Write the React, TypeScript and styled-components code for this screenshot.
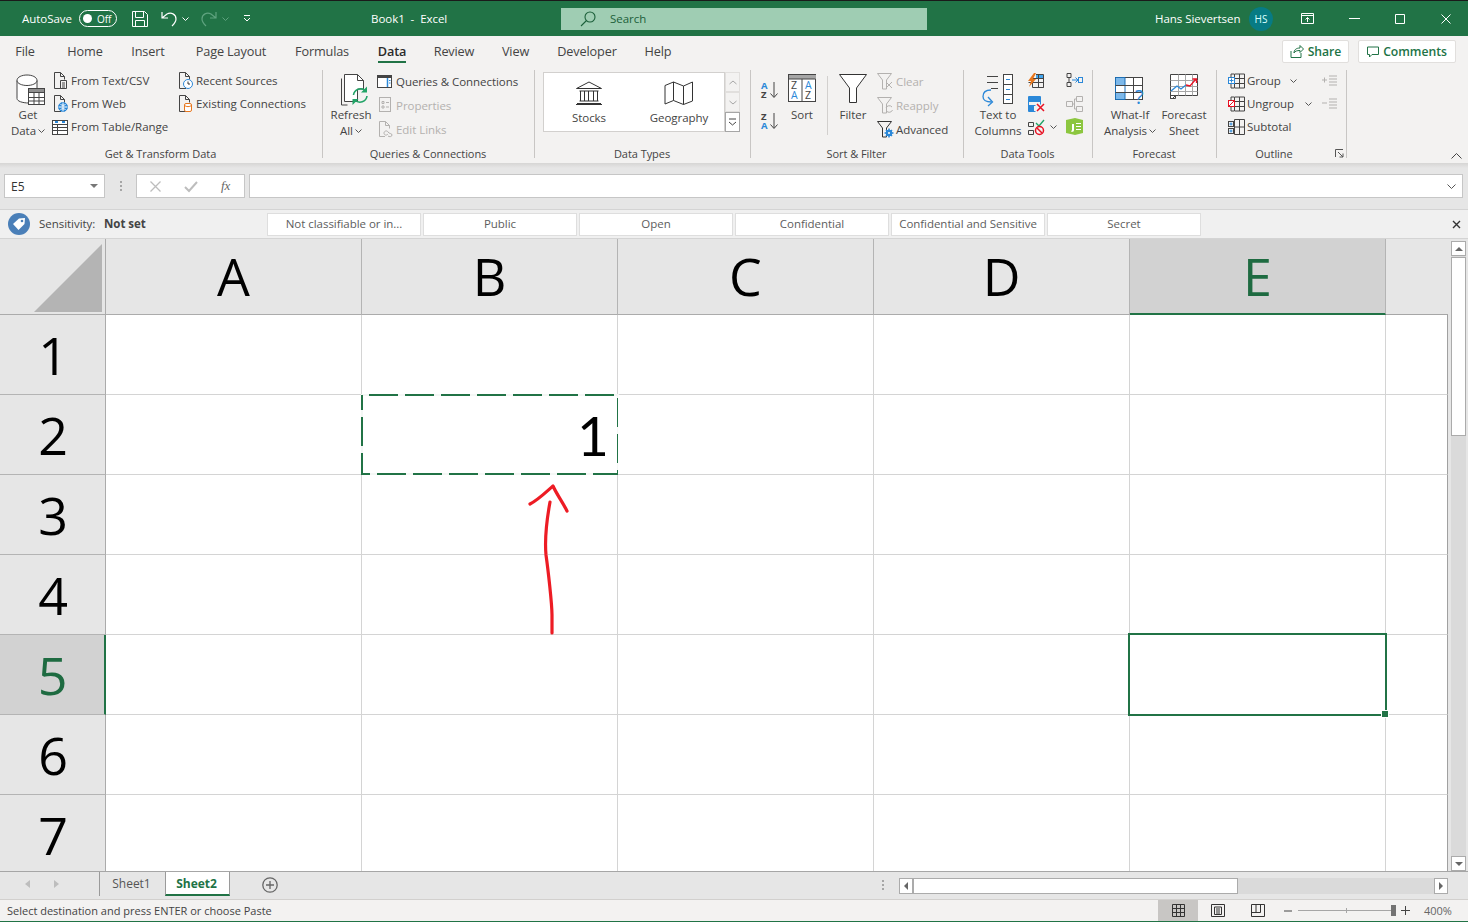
import React from "react";
import styled, { createGlobalStyle } from "styled-components";

const GREEN = "#217346";
const INK = "#444444";
const DIM = "#b3b1af";
const FONT = `"Open Sans", "Noto Sans", "Liberation Sans", sans-serif`;

const Global = createGlobalStyle`
  html, body { margin: 0; padding: 0; overflow: hidden; background: #f3f2f1; }
  * { box-sizing: border-box; }
`;

const Page = styled.div`
  width: 1468px; height: 922px; display: flex; flex-direction: column; overflow: hidden;
  font-family: ${FONT}; font-size: 11.5px; color: ${INK}; letter-spacing: -0.04px;
`;

/* ---------- title bar ---------- */
const TitleBar = styled.div`
  height: 36px; flex: none; background: ${GREEN}; border-top: 1px solid #1a1a1a; color: #fff;
  display: flex; align-items: center; padding-left: 22px;
`;
const TitleText = styled.span<{ $ml?: number; $w?: number }>`
  margin-left: ${(p) => p.$ml ?? 0}px; font-size: 11.5px; white-space: nowrap; flex: none;
  ${(p) => (p.$w ? `width:${p.$w}px;` : "")}
`;
const Toggle = styled.span`
  width: 38px; height: 17px; border: 1px solid #fff; border-radius: 9px; margin-left: 8px; flex: none;
  display: flex; align-items: center; padding-left: 3px; gap: 5px; font-size: 10px; color: #fff;
`;
const Knob = styled.span`width: 9px; height: 9px; border-radius: 50%; background: #fff; flex: none;`;
const SearchBox = styled.div`
  width: 366px; height: 22px; background: #9fcdb3; margin-left: 113px; flex: none;
  display: flex; align-items: center; padding-left: 19px; color: #1c5f3a; gap: 14px; font-size: 11.5px;
`;
const Avatar = styled.span`
  width: 24px; height: 24px; border-radius: 50%; background: #077b84; color: #dff; font-size: 10px;
  display: flex; align-items: center; justify-content: center; margin-left: 11px; flex: none;
`;
const Spacer = styled.span<{ $w: number }>`width: ${(p) => p.$w}px; flex: none; display: flex; align-items: center;`;

/* ---------- tabs ---------- */
const TabRow = styled.div`
  height: 32px; flex: none; background: #f3f2f1; display: flex; align-items: center; padding-left: 4px; position: relative;
`;
const Tab = styled.div<{ $w: number; $on?: boolean }>`
  width: ${(p) => p.$w}px; flex: none; height: 32px; font-size: 12.7px; line-height: 31px; text-align: center;
  letter-spacing: -0.15px; color: ${(p) => (p.$on ? "#2b2b2b" : INK)}; font-weight: ${(p) => (p.$on ? 600 : 400)};
  display: flex; flex-direction: column; align-items: center;
`;
const TabBar = styled.span`width: 28px; height: 2px; background: ${GREEN}; margin-top: -6px; flex: none;`;
const TopButtons = styled.div`margin-left: auto; display: flex; gap: 9px; padding-right: 12px; margin-top: -1px;`;
const TopButton = styled.div<{ $w: number }>`
  width: ${(p) => p.$w}px; height: 23px; background: #fff; border: 1px solid #e1dfdd; border-radius: 2px; color: ${GREEN};
  font-size: 12.2px; font-weight: 600; display: flex; align-items: center; justify-content: center; gap: 4px;
`;

/* ---------- ribbon ---------- */
const Ribbon = styled.div`height: 95px; flex: none; background: #f3f2f1; display: flex; padding-top: 2px;`;
const Group = styled.div<{ $w: number }>`
  width: ${(p) => p.$w}px; flex: none; display: flex; flex-direction: column; position: relative;
  &::after { content: ""; position: absolute; right: 0; top: 0; width: 1px; height: 88px; background: #c8c6c4; }
`;
const Body = styled.div<{ $pl: number }>`height: 76px; flex: none; display: flex; padding-left: ${(p) => p.$pl}px;`;
const GroupLabel = styled.div<{ $pr?: number }>`
  height: 16px; line-height: 16px; text-align: center; font-size: 11px; letter-spacing: -0.05px; padding-right: ${(p) => p.$pr ?? 2}px; white-space: nowrap;
`;
const Launcher = styled.span`position: absolute; right: 3px; top: 79px; display: flex;`;
const Big = styled.div<{ $w: number; $ml?: number }>`
  width: ${(p) => p.$w}px; margin-left: ${(p) => p.$ml ?? 0}px; flex: none; display: flex; flex-direction: column; align-items: center; line-height: 16px; padding-top: 4px; white-space: nowrap;
`;
const BigIcon = styled.div<{ $pl?: number; $pt?: number }>`
  height: 33px; flex: none; display: flex; align-items: flex-start; justify-content: center;
  padding-left: ${(p) => p.$pl ?? 0}px; padding-top: ${(p) => p.$pt ?? 0}px;
`;
const Caret = styled.span`display: inline-flex; align-items: center; gap: 2px;`;
const Col = styled.div<{ $w?: number; $ml?: number; $pitch?: number }>`
  display: flex; flex-direction: column; flex: none; margin-left: ${(p) => p.$ml ?? 0}px; margin-top: -1px;
  ${(p) => (p.$w ? `width:${p.$w}px;` : "")}
  & > * { height: ${(p) => p.$pitch ?? 23}px; flex: none; }
`;
const Small = styled.div<{ $off?: boolean; $gap?: number }>`
  display: flex; align-items: center; gap: ${(p) => p.$gap ?? 3}px; white-space: nowrap; color: ${(p) => (p.$off ? DIM : INK)};
`;
const SortCol = styled.div`width: 18px; margin-left: 10px; flex: none; display: flex; flex-direction: column; gap: 13px; padding-top: 11px;`;
const VRule = styled.div`width: 1px; height: 59px; background: #d2d0ce; margin: 6px 5px 0 8px; flex: none;`;
const ChevronSlot = styled.span<{ $ml: number }>`margin-left: ${(p) => p.$ml}px; display: flex;`;
const Gallery = styled.div`
  width: 197px; height: 60px; margin: 2px 0 0 8px; display: flex; flex: none;
`;
const GalleryItems = styled.div`
  width: 182px; height: 60px; background: #fff; border: 1px solid #d2d0ce; display: flex; flex: none;
`;
const GalleryItem = styled.div`
  width: 90px; flex: none; display: flex; flex-direction: column; align-items: center; padding-top: 8px; gap: 5px; line-height: 16px;
`;
const GalleryScroll = styled.div`width: 15px; flex: none; display: flex; flex-direction: column; gap: 0;`;
const GalleryBtn = styled.div<{ $on?: boolean }>`
  flex: 1; border: 1px solid ${(p) => (p.$on ? "#a6a6a6" : "#e1dfdd")}; background: ${(p) => (p.$on ? "#fff" : "#f3f2f1")};
  display: flex; align-items: center; justify-content: center;
`;
const Collapse = styled.div`margin-left: auto; align-self: flex-end; padding: 0 6px 4px 0; display: flex;`;

/* ---------- formula ---------- */
const FormulaBar = styled.div`
  height: 46px; flex: none; padding: 11px 5px 0 4px; display: flex; align-items: flex-start;
  background: linear-gradient(#d6d5d4 0, #e6e6e6 5px, #e6e6e6 100%);
`;
const FBox = styled.div<{ $w?: number; $grow?: boolean; $ml?: number }>`
  height: 24px; background: #fff; border: 1px solid #c6c6c6; flex: ${(p) => (p.$grow ? "1" : "none")};
  ${(p) => (p.$w ? `width:${p.$w}px;` : "")} margin-left: ${(p) => p.$ml ?? 0}px;
  display: flex; align-items: center; padding: 0 6px; justify-content: space-between; color: #333; font-size: 12px;
`;
const FxBox = styled.div`
  height: 24px; width: 109px; background: #fff; border: 1px solid #c6c6c6; flex: none;
  display: flex; align-items: center; padding-left: 13px; gap: 23px;
`;
const Grip = styled.div`
  width: 31px; height: 24px; flex: none; display: flex; flex-direction: column; align-items: center; justify-content: center; gap: 2px;
  & > span { width: 2px; height: 2px; background: #a6a6a6; }
`;

/* ---------- sensitivity ---------- */
const SensBar = styled.div`
  height: 30px; flex: none; background: #f0f0f0; border-top: 1px solid #d4d4d4; border-bottom: 1px solid #d4d4d4;
  display: flex; align-items: center; padding-left: 8px; position: relative;
`;
const SensName = styled.span<{ $w: number; $b?: boolean; $ml?: number }>`
  width: ${(p) => p.$w}px; margin-left: ${(p) => p.$ml ?? 0}px; flex: none; white-space: nowrap; margin-top: -2px; font-weight: ${(p) => (p.$b ? 700 : 400)};
`;
const SensBtns = styled.div`display: flex; gap: 2px; flex: none;`;
const SensBtn = styled.div`
  width: 154px; height: 23px; background: #fff; border: 1px solid #dedede; text-align: center; line-height: 20px; color: #5d5d5d; white-space: nowrap;
`;
const SensClose = styled.span`margin-left: auto; margin-right: 7px; display: flex;`;

/* ---------- sheet ---------- */
const SheetArea = styled.div`height: 632px; flex: none; display: flex; background: #e6e6e6;`;
const GridWrap = styled.div`width: 1448px; height: 632px; flex: none; position: relative; overflow: hidden;`;
const Grid = styled.div`
  display: grid; grid-template-columns: 106px repeat(5, 256px) 62px; grid-template-rows: 76px repeat(7, 80px);
  width: 1448px;
`;
const Corner = styled.div`
  background: #e6e6e6; border-right: 1px solid #ababab; border-bottom: 1px solid #ababab; display: flex; align-items: flex-end; justify-content: flex-end; padding: 0 3px 2px 0;
`;
const Triangle = styled.div`
  width: 68px; height: 68px; background: #b4b4b4; clip-path: polygon(100% 0, 100% 100%, 0 100%);
`;
const ColHead = styled.div<{ $sel?: boolean }>`
  background: ${(p) => (p.$sel ? "#d2d2d2" : "#e6e6e6")}; border-right: 1px solid #b4b4b4;
  border-bottom: ${(p) => (p.$sel ? `2px solid ${GREEN}` : "1px solid #ababab")};
  color: ${(p) => (p.$sel ? "#1e6b41" : "#000")}; font-size: 52px; letter-spacing: 0; line-height: 73px; text-align: center;
`;
const ColFill = styled.div`background: #e6e6e6; border-bottom: 1px solid #a6a6a6;`;
const RowHead = styled.div<{ $sel?: boolean }>`
  background: ${(p) => (p.$sel ? "#d2d2d2" : "#e6e6e6")}; border-bottom: 1px solid #b4b4b4;
  border-right: ${(p) => (p.$sel ? `2px solid ${GREEN}` : "1px solid #ababab")};
  color: ${(p) => (p.$sel ? "#1e6b41" : "#000")}; font-size: 52px; letter-spacing: 0; line-height: 80px; text-align: center; padding-left: 1px;
`;
const Cell = styled.div<{ $end?: boolean }>`
  background: #fff; border-bottom: 1px solid #d4d4d4; position: relative;
  border-right: 1px solid ${(p) => (p.$end ? "#a0a0a0" : "#d4d4d4")};
`;
const CellValue = styled.div`
  font-family: Lato, Carlito, sans-serif; font-size: 55px; line-height: 80px; text-align: right; padding-right: 8px; color: #000; letter-spacing: 0;
`;
const Ants = styled.svg`position: absolute; left: -1px; top: -1px; overflow: visible; pointer-events: none;`;
const Selection = styled.div`
  position: absolute; left: -2px; top: -2px; width: 259px; height: 83px; border: 2px solid ${GREEN}; z-index: 2;
`;
const Handle = styled.span`
  position: absolute; right: -3px; bottom: -3px; width: 6px; height: 6px; background: ${GREEN}; outline: 1px solid #fff;
`;
const Arrow = styled.svg`position: absolute; left: 520px; top: 240px; z-index: 3;`;

const VScroll = styled.div`width: 20px; flex: none; height: 632px; padding: 2px 2px 0 3px; display: flex; flex-direction: column;`;
const SBtn = styled.div`height: 15px; flex: none; background: #fff; border: 1px solid #ababab; display: flex; align-items: center; justify-content: center;`;
const VTrack = styled.div`flex: 1; background: #dadada; display: flex; flex-direction: column;`;
const VThumb = styled.div`height: 179px; background: #fff; border: 1px solid #ababab; margin-top: 1px;`;

/* ---------- sheet tabs ---------- */
const SheetBar = styled.div`
  height: 28px; flex: none; background: #e6e6e6; border-top: 1px solid #a6a6a6; display: flex; align-items: flex-start; position: relative;
`;
const NavSlot = styled.div`
  width: 100px; height: 24px; flex: none; display: flex; align-items: center; padding-left: 25px; gap: 24px; position: relative;
  border-right: 1px solid #9a9a9a;
`;
const SheetTab = styled.div<{ $on?: boolean }>`
  width: 65px; height: 24px; flex: none; text-align: center; line-height: 24px; font-size: 12px; padding-right: 2px;
  ${(p) => p.$on ? `background:#fff;color:${GREEN};font-weight:700;border-bottom:2px solid ${GREEN};border-left:1px solid #9a9a9a;border-right:1px solid #9a9a9a;line-height:23px;` : "color:#555;"}
`;
const AddSheet = styled.div`margin-left: 32px; height: 26px; display: flex; align-items: center; flex: none;`;
const HGrip = styled.div`
  margin-left: auto; width: 15px; height: 26px; display: flex; flex-direction: column; align-items: center; justify-content: center; gap: 2px; flex: none;
  & > span { width: 2px; height: 2px; background: #a6a6a6; }
`;
const HScroll = styled.div`width: 549px; height: 16px; margin: 6px 20px 0 9px; flex: none; display: flex; background: #dadada;`;
const HBtn = styled.div`width: 14px; flex: none; background: #fff; border: 1px solid #ababab; display: flex; align-items: center; justify-content: center;`;
const HThumb = styled.div`width: 325px; background: #fff; border: 1px solid #ababab; flex: none;`;
const HFill = styled.div`flex: 1;`;

/* ---------- status ---------- */
const Status = styled.div`
  height: 23px; flex: none; background: #f3f2f1; border-top: 1px solid #d2d0ce; border-bottom: 1px solid ${GREEN};
  display: flex; align-items: center; padding-left: 7px; font-size: 11px; letter-spacing: 0;
`;
const StatusText = styled.span`width: 1151px; flex: none; white-space: nowrap;`;
const ViewBtn = styled.div<{ $on?: boolean }>`
  width: 40px; height: 21px; flex: none; display: flex; align-items: center; justify-content: center; background: ${(p) => (p.$on ? "#c8c6c4" : "transparent")};
`;
const Zoomer = styled.div`display: flex; align-items: center; margin-left: 6px; flex: none; color: #666;`;
const ZoomTrack = styled.div`width: 96px; height: 1px; background: #a6a6a6; margin: 0 7px 0 6px; position: relative;`;
const ZoomTick = styled.span`position: absolute; left: 48px; top: -2px; width: 1px; height: 5px; background: #a6a6a6;`;
const ZoomThumb = styled.span`position: absolute; right: -2px; top: -5px; width: 5px; height: 11px; background: #737373;`;
const ZoomPct = styled.span`margin-left: 14px; font-size: 11px; color: #666;`;

/* ---------- icons ---------- */
const Svg: React.FC<React.SVGProps<SVGSVGElement> & { w: number; h: number }> = ({ w, h, children, ...r }) => (
  <svg width={w} height={h} viewBox={`0 0 ${w} ${h}`} fill="none" stroke="#444" strokeWidth="1" overflow="visible" style={{ display: "block", flex: "none" }} {...r}>{children}</svg>
);
const Chev = ({ c = "#555" }: { c?: string }) => (
  <Svg w={7} h={4} stroke={c}><path d="M.5.5 3.5 3.5 6.5.5" /></Svg>
);
const Doc = ({ children, c = "#444" }: { children?: React.ReactNode; c?: string }) => (
  <Svg w={16} h={17} stroke={c}>
    <path d="M9 16.5H2.5v-16h6l4 4v3M8.5.5v4h4" />{children}
  </Svg>
);
const TextCsv = () => <Doc><path fill="#f3f2f1" d="M8.5 8.5h6v8h-6z" /><path d="M10 11h3M10 13h3M10 15h3" /></Doc>;
const Web = () => <Doc><circle cx="11" cy="12" r="4.5" fill="#2b88d8" stroke="#2b88d8" /><path stroke="#fff" d="M6.5 12h9M11 7.5v9M8.5 9.5c2 1 3 1 5 0M8.5 14.5c2-1 3-1 5 0" /></Doc>;
const TableRange = () => (
  <Svg w={16} h={16}>
    <rect x=".5" y="1.5" width="15" height="14" fill="#fff" /><path stroke="#2b88d8" strokeWidth="2" d="M3 3h3M10 3h3" /><path d="M.5 5.5h15M.5 8.5h15M.5 11.5h15M5.5 5.5v10" />
  </Svg>
);
const Recent = () => <Doc><circle cx="11" cy="12" r="4.5" fill="#fff" stroke="#2b88d8" /><path stroke="#333" d="M11 9.5V12h2" /></Doc>;
const Existing = () => <Doc><rect x="7.5" y="8.5" width="7" height="8" rx="1.5" fill="#fff" stroke="#e8771d" /><path stroke="#e8771d" d="M7.5 10.5c2 1.5 5 1.5 7 0" /></Doc>;
const GetDataI = () => (
  <Svg w={30} h={32}>
    <path fill="#fff" d="M1 6.5C1 3 6 1 11 1s10 2 10 5.500V16H13v13C6 29 1 27 1 24.500z" />
    <path d="M1 6.500c0 3 5 5 10 5s10-2 10-5" />
    <rect x="12.500" y="14.500" width="16" height="16" fill="#fff" /><path fill="#8f8f8f" stroke="none" d="M13 15h15v3H13z" />
    <path d="M12.500 18.500h16M12.500 23.500h16M12.500 27h16M18 18.500v12M23 18.500v12" />
  </Svg>
);
const RefreshI = () => (
  <Svg w={30} h={33}>
    <path fill="#fff" d="M4.500 27.500V.5h13l6 6V15h-6v12.500z" /><path d="M17.500.5v6h6" />
    <path d="M1.500 4.500v26.500h6" />
    <path stroke="#21a366" strokeWidth="1.600" d="M13.500 21a7 7 0 0 1 12-4M27 22a7 7 0 0 1-12 4" />
    <path fill="#21a366" stroke="none" d="M27 12.500v6h-6zM12.500 31v-6h6z" />
  </Svg>
);
const QueriesI = () => (
  <Svg w={16} h={13}>
    <rect x=".5" y=".5" width="14" height="12" fill="#fff" /><path strokeWidth="2" d="M1 2h13" /><path stroke="#2b88d8" strokeWidth="1.500" d="M10.500 3v9" /><path stroke="#2b88d8" d="M12 5.500h1.500M12 8h1.500" />
  </Svg>
);
const PropsI = () => (
  <Svg w={16} h={16} stroke={DIM}><rect x="2.500" y=".5" width="11" height="14" /><path d="M5 4.500h2v2H5zM5 9h2v2H5zM9 5.500h3M9 10h3" /></Svg>
);
const LinksI = () => (
  <Svg w={16} h={17} stroke={DIM}><path d="M8 15.500H2.500V.5h6l4 4v3M8.500.5v4h4" /><path d="M7 12c0-2 3-3 4-1s4 1 4 3-3 2-4 1M7 12c0 2 2 3 4 1" /></Svg>
);
const Bank = () => (
  <Svg w={28} h={24} stroke="#333">
    <path d="M1.500 7.500 14 1l12.500 6.500zM2 22.500h24M1 23.500h26M4.500 10h19M4.500 20h19M5.500 10v10M9.500 10v10M13.500 10v10M18.500 10v10M22.500 10v10" />
  </Svg>
);
const MapI = () => (
  <Svg w={30} h={24} stroke="#333"><path d="M1 4.500 9.500 1l10 4L28.500 1v19l-9 3.500-10-4L1 23zM9.500 1v18.500M19.500 5v18.500" /></Svg>
);
const UpTri = ({ c = "#a6a6a6" }: { c?: string }) => <Svg w={8} h={5} stroke={c}><path d="M.5 4 4 1l3.500 3" /></Svg>;
const DownTri = ({ c = "#a6a6a6" }: { c?: string }) => <Svg w={8} h={5} stroke={c}><path d="M.5 1 4 4l3.500-3" /></Svg>;
const More = () => <Svg w={9} h={8} stroke="#444"><path d="M1 1h7" /><path d="M1 4l3.500 3L8 4" /></Svg>;
const SortAZ = ({ rev }: { rev?: boolean }) => (
  <Svg w={18} h={18} stroke="none">
    <text x="0" y="8" fontFamily={FONT} fontSize="9.500" fontWeight="700" fill={rev ? "#444" : "#2b88d8"}>{rev ? "Z" : "A"}</text>
    <text x="0" y="17" fontFamily={FONT} fontSize="9.500" fontWeight="700" fill={rev ? "#2b88d8" : "#444"}>{rev ? "A" : "Z"}</text>
    <path stroke="#444" d="M13 1v15M9.500 12.500 13 16.500l3.500-4" />
  </Svg>
);
const SortI = () => (
  <Svg w={29} h={29}>
    <rect x=".5" y=".5" width="27" height="27" fill="#fff" /><path fill="#a6a6a6" stroke="none" d="M1 1h27v4H1z" /><path d="M14 5v23M.5 5h27" />
    <text x="3" y="15" stroke="none" fontFamily={FONT} fontSize="10.500" fill="#444">Z</text>
    <text x="3" y="25" stroke="none" fontFamily={FONT} fontSize="10.500" fill="#2b88d8">A</text>
    <text x="17" y="15" stroke="none" fontFamily={FONT} fontSize="10.500" fill="#2b88d8">A</text>
    <text x="17" y="25" stroke="none" fontFamily={FONT} fontSize="10.500" fill="#444">Z</text>
  </Svg>
);
const FilterI = () => (
  <Svg w={28} h={29} stroke="#333"><path fill="#fff" d="M.5.5h27L17.500 14v14.500h-7V14z" /></Svg>
);
const Funnel = ({ c = DIM, children }: { c?: string; children?: React.ReactNode }) => (
  <Svg w={17} h={17} stroke={c}><path d="M.5.5h14L9.500 7v9h-4V7z" />{children}</Svg>
);
const ClearI = () => <Funnel><path d="M9 9l6 6M15 9l-6 6" /></Funnel>;
const ReapplyI = () => <Funnel><path d="M9 11a3.500 3.500 0 0 1 6-1M15.500 13a3.500 3.500 0 0 1-6 1" /></Funnel>;
const AdvancedI = () => <Funnel c="#333"><circle cx="12" cy="12" r="3" fill="#2b88d8" stroke="#2b88d8" /><path stroke="#2b88d8" strokeWidth="1.500" d="M12 7.500v9M7.500 12h9M9 9l6 6M15 9l-6 6" /><circle cx="12" cy="12" r="1" fill="#fff" stroke="none" /></Funnel>;
const TextColsI = () => (
  <Svg w={32} h={32}>
    <path d="M5 2.500h11M5 8.500h11M9 14.500h7" />
    <path stroke="#2b88d8" strokeWidth="1.300" d="M9 16c-6 0-8 3-8 6.500S4 28 9.500 28" /><path stroke="#2b88d8" strokeWidth="1.300" d="M6 23l4.500 5-4.500 4" />
    <rect x="21.500" y=".5" width="9" height="29" fill="#fff" /><path d="M21.500 10.500h9M21.500 20.500h9" /><path stroke="#2b88d8" d="M24 5.500h4M24 15.500h4M24 25.500h4" />
  </Svg>
);
const FlashI = () => (
  <Svg w={16} h={15}>
    <path fill="#41a5ee" stroke="none" d="M8 1h7v4H8z" /><path d="M4.500 14.500v-9h11v9zM.5 9.500h15M8 1.500h7.500v13M10.500 1.500v13" />
    <path fill="#e8771d" stroke="none" d="M6 0 0 8h3L1 14l7-8H5l3-6z" />
  </Svg>
);
const DupI = () => (
  <Svg w={17} h={16}>
    <path fill="#2b88d8" stroke="none" d="M1 1h11v4H1zM1 9h5v6H1z" /><path stroke="#2b88d8" d="M.5.5h12v8M.5.5v15h7M.5 5.500h12M.5 9.500h7" />
    <path stroke="#e81123" strokeWidth="1.500" d="M9 8l7 7M16 8l-7 7" />
  </Svg>
);
const ValidI = () => (
  <Svg w={17} h={16}>
    <path d="M.5 3.500h5v4h-5zM.5 11.500h5v4h-5z" />
    <path stroke="#21a366" strokeWidth="1.400" d="M8 4l3 3 5-6" />
    <circle cx="11.500" cy="11.500" r="4" stroke="#e81123" strokeWidth="1.500" /><path stroke="#e81123" strokeWidth="1.500" d="M9 9l5 5" />
  </Svg>
);
const ConsolI = () => (
  <Svg w={17} h={15}>
    <path d="M1 .5h4v4H1zM1 9.500h4v4H1z" /><path d="M3 4.500v5" />
    <path stroke="#2b88d8" d="M6 7h6M9.500 4.500 12 7 9.500 9.500" /><rect x="12.500" y="4.500" width="4" height="5" stroke="#2b88d8" />
  </Svg>
);
const RelI = () => (
  <Svg w={17} h={16} stroke={DIM}><path d="M.5 5.500h6v5h-6zM10.500.5h6v5h-6zM10.500 10.500h6v5h-6zM6.500 8H8.500V3h2M8.500 8v5h2" /></Svg>
);
const ModelI = () => (
  <Svg w={17} h={17} stroke="none">
    <path fill="#8cc63f" d="M0 2 9 0l8 2v13l-8 2-9-2z" /><path fill="#fff" d="M6 6h2v6c0 2-2 2-3 1.500l.5-1c.5.2.5 0 .5-.5zM10 5h5v1h-5zM10 8h5v1h-5zM10 11h5v1h-5z" />
  </Svg>
);
const WhatIfI = () => (
  <Svg w={32} h={30}>
    <rect x=".5" y=".5" width="27" height="22" fill="#fff" /><path fill="#7cb8ea" stroke="none" d="M1 1h9v7H1zM1 16h9v6H1z" />
    <path stroke="#1c6fb5" d="M.5.5h9.500v22H.5z" /><path d="M.5 8.500h27M.5 15.500h27M18.500.5v22" />
    <text x="20" y="27" stroke="none" fontFamily={FONT} fontSize="20" fill="#2b88d8">?</text>
  </Svg>
);
const ForecastI = () => (
  <Svg w={29} h={26}>
    <path d="M.5.5h27v21h-22l-3 3h-2z" fill="#fff" /><path stroke="#a6a6a6" d="M.5 6.500h27M.5 12.500h27M.5 17.500h27M8.500.5v21M15.500.5v21M22.500.5v21" />
    <path stroke="#2b88d8" strokeWidth="1.300" d="M1 17l6-5 4 3 5-4" /><path stroke="#e81123" strokeWidth="1.300" d="M16 11l4 1 6-7M22.500 5H26.500V9" />
    <path d="M.5 21.500h5v3h-5z" />
  </Svg>
);
const OutlineI = ({ c = "#2b88d8", minus }: { c?: string; minus?: boolean }) => (
  <Svg w={17} h={16}>
    <path d="M6.500 1h10v14h-10zM6.500 5.500h10M6.500 10.500h10M11.500 1v14" />
    <rect x=".5" y="4.500" width="6" height="6" fill="#fff" stroke={c} />
    {minus ? <path stroke={c} d="M1 10l5-5" /> : <path stroke={c} d="M3.500 5.500v4M1.500 7.500h4" />}
    <path d="M3 1h3M3 4.500V1M3 11v4h3" />
  </Svg>
);
const SubtotalI = () => (
  <Svg w={17} h={16}>
    <path d="M6.500 .5h10v15h-10zM6.500 8h10M11.500 .5v15" />
    <rect x=".5" y="2.500" width="5" height="5" /><rect x=".5" y="9.500" width="5" height="5" />
    <path stroke="#2b88d8" d="M3 3.500v3M1.500 5h3M3 10.500v3M1.500 12h3" />
  </Svg>
);
const IndentI = ({ plus }: { plus?: boolean }) => (
  <Svg w={16} h={12} stroke={DIM}><path d="M8 1h8M8 4h8M8 7h8M8 10h8" />{plus ? <path d="M1 5h5M3.500 2.500v5" /> : <path d="M1 5h5" />}</Svg>
);

export default function App() {
  const cols = ["A", "B", "C", "D", "E"];
  const rows = [1, 2, 3, 4, 5, 6, 7];
  return (
    <Page>
      <Global />
      <TitleBar>
        <TitleText $w={49}>AutoSave</TitleText>
        <Toggle><Knob />Off</Toggle>
        <Spacer $w={15} />
        <Svg w={16} h={16} stroke="#fff"><path d="M.5.5h12l3 3v12H.5zM3.500.5v6h8v-6M3.500 15.500v-6h9v6" /></Svg>
        <Spacer $w={13} />
        <Svg w={16} h={16} stroke="#fff" strokeWidth="1.200"><path d="M1 1v6h6M1 7l5-4c4-2 9 0 9 5 0 3-2 5-4 7" /></Svg>
        <Spacer $w={5} />
        <Chev c="#fff" />
        <Spacer $w={12} />
        <Svg w={16} h={16} stroke="#5fa37f" strokeWidth="1.200"><path d="M15 1v6H9M15 7l-5-4C6 1 1 3 1 8c0 3 2 5 4 7" /></Svg>
        <Spacer $w={5} />
        <Chev c="#5fa37f" />
        <Spacer $w={14} />
        <Svg w={8} h={7} stroke="#fff"><path d="M1 .5h6" /><path d="M1 3l3 3 3-3" /></Svg>
        <TitleText $ml={120} $w={77}>Book1&nbsp; -&nbsp; Excel</TitleText>
        <SearchBox>
          <Svg w={16} h={16} stroke="#1c5f3a" strokeWidth="1.100"><circle cx="10" cy="6" r="5" /><path d="M6.500 9.500 1 15" /></Svg>
          Search
        </SearchBox>
        <TitleText $ml={228} $w={83}>Hans Sievertsen</TitleText>
        <Avatar>HS</Avatar>
        <Spacer $w={28} />
        <Svg w={13} h={11} stroke="#fff"><path d="M.5.5h12v10H.5zM.5 2.500h12M6.500 9V4.500M4.500 6.500l2-2 2 2" /></Svg>
        <Spacer $w={35} />
        <Svg w={11} h={2} stroke="#fff"><path d="M0 .5h11" /></Svg>
        <Spacer $w={35} />
        <Svg w={10} h={10} stroke="#fff"><path d="M.5.5h9v9h-9z" /></Svg>
        <Spacer $w={36} />
        <Svg w={10} h={10} stroke="#fff"><path d="M.5.5l9 9M9.500.5l-9 9" /></Svg>
      </TitleBar>

      <TabRow>
        <Tab $w={42}>File</Tab>
        <Tab $w={78}>Home</Tab>
        <Tab $w={48}>Insert</Tab>
        <Tab $w={118}>Page Layout</Tab>
        <Tab $w={64}>Formulas</Tab>
        <Tab $w={76} $on>Data<TabBar /></Tab>
        <Tab $w={48}>Review</Tab>
        <Tab $w={75}>View</Tab>
        <Tab $w={68}>Developer</Tab>
        <Tab $w={74}>Help</Tab>
        <TopButtons>
          <TopButton $w={67}>
            <Svg w={14} h={13} stroke={GREEN}><path d="M1 6v6.500h10V8M4 8c0-3 2-5 6-5V.5L13.500 4 10 7.500V5.500C7 5.500 5 6 4 8z" /></Svg>
            Share
          </TopButton>
          <TopButton $w={98}>
            <Svg w={12} h={12} stroke={GREEN}><path d="M.5 1h11v7.500H5L2.500 11V8.500h-2z" /></Svg>
            Comments
          </TopButton>
        </TopButtons>
      </TabRow>

      <Ribbon>
        <Group $w={323}>
          <Body $pl={8}>
            <Big $w={40}>
              <BigIcon $pl={6}><GetDataI /></BigIcon>
              <span>Get</span>
              <Caret>Data <Chev /></Caret>
            </Big>
            <Col $w={125} $ml={4}>
              <Small><TextCsv />From Text/CSV</Small>
              <Small><Web />From Web</Small>
              <Small><TableRange />From Table/Range</Small>
            </Col>
            <Col>
              <Small><Recent />Recent Sources</Small>
              <Small><Existing />Existing Connections</Small>
            </Col>
          </Body>
          <GroupLabel>Get &amp; Transform Data</GroupLabel>
        </Group>
        <Group $w={212}>
          <Body $pl={8}>
            <Big $w={40}>
              <BigIcon $pl={8}><RefreshI /></BigIcon>
              <span>Refresh</span>
              <Caret>All <Chev /></Caret>
            </Big>
            <Col $ml={6} $pitch={24}>
              <Small><QueriesI />Queries &amp; Connections</Small>
              <Small $off><PropsI />Properties</Small>
              <Small $off><LinksI />Edit Links</Small>
            </Col>
          </Body>
          <GroupLabel>Queries &amp; Connections</GroupLabel>
        </Group>
        <Group $w={216}>
          <Body $pl={0}>
            <Gallery>
              <GalleryItems>
                <GalleryItem><Bank />Stocks</GalleryItem>
                <GalleryItem><MapI />Geography</GalleryItem>
              </GalleryItems>
              <GalleryScroll>
                <GalleryBtn><UpTri /></GalleryBtn>
                <GalleryBtn><DownTri /></GalleryBtn>
                <GalleryBtn $on><More /></GalleryBtn>
              </GalleryScroll>
            </Gallery>
          </Body>
          <GroupLabel>Data Types</GroupLabel>
        </Group>
        <Group $w={213}>
          <Body $pl={0}>
            <SortCol><SortAZ /><SortAZ rev /></SortCol>
            <Big $w={34} $ml={6}>
              <BigIcon><SortI /></BigIcon>
              <span>Sort</span>
            </Big>
            <VRule />
            <Big $w={40}>
              <BigIcon><FilterI /></BigIcon>
              <span>Filter</span>
            </Big>
            <Col $ml={4} $pitch={24}>
              <Small $off $gap={2}><ClearI />Clear</Small>
              <Small $off $gap={2}><ReapplyI />Reapply</Small>
              <Small $gap={2}><AdvancedI />Advanced</Small>
            </Col>
          </Body>
          <GroupLabel>Sort &amp; Filter</GroupLabel>
        </Group>
        <Group $w={129}>
          <Body $pl={4}>
            <Big $w={60}>
              <BigIcon><TextColsI /></BigIcon>
              <span>Text to</span>
              <span>Columns</span>
            </Big>
            <Col $w={38}>
              <Small><FlashI /></Small>
              <Small><DupI /></Small>
              <Small $gap={5}><ValidI /><Chev /></Small>
            </Col>
            <Col>
              <Small><ConsolI /></Small>
              <Small><RelI /></Small>
              <Small><ModelI /></Small>
            </Col>
          </Body>
          <GroupLabel>Data Tools</GroupLabel>
        </Group>
        <Group $w={124}>
          <Body $pl={7}>
            <Big $w={60}>
              <BigIcon $pl={2} $pt={3}><WhatIfI /></BigIcon>
              <span>What-If</span>
              <Caret>Analysis <Chev /></Caret>
            </Big>
            <Big $w={48}>
              <BigIcon><ForecastI /></BigIcon>
              <span>Forecast</span>
              <span>Sheet</span>
            </Big>
          </Body>
          <GroupLabel>Forecast</GroupLabel>
        </Group>
        <Group $w={130}>
          <Body $pl={11}>
            <Col $w={93}>
              <Small $gap={2}><OutlineI />Group<ChevronSlot $ml={7}><Chev /></ChevronSlot></Small>
              <Small $gap={2}><OutlineI c="#e81123" minus />Ungroup<ChevronSlot $ml={9}><Chev /></ChevronSlot></Small>
              <Small $gap={2}><SubtotalI />Subtotal</Small>
            </Col>
            <Col>
              <Small><IndentI plus /></Small>
              <Small><IndentI /></Small>
            </Col>
          </Body>
          <GroupLabel $pr={16}>Outline</GroupLabel>
          <Launcher>
            <Svg w={9} h={9} stroke="#555"><path d="M.5 8V.5H8M3 3l5 5M8 4.500V8H4.500" /></Svg>
          </Launcher>
        </Group>
        <Collapse><Svg w={11} h={6} stroke="#444"><path d="M.5 5.500 5.500.5l5 5" /></Svg></Collapse>
      </Ribbon>

      <FormulaBar>
        <FBox $w={101}>
          E5
          <Svg w={8} h={4} stroke="none"><path fill="#777" d="M0 0h8L4 4z" /></Svg>
        </FBox>
        <Grip><span /><span /><span /></Grip>
        <FxBox>
          <Svg w={11} h={11} stroke="#bdbdbd" strokeWidth="1.300"><path d="M.5.5l10 10M10.500.5l-10 10" /></Svg>
          <Svg w={14} h={11} stroke="#bdbdbd" strokeWidth="2"><path d="M1 6l4 4 8-9" /></Svg>
          <Svg w={14} h={14} stroke="none">
            <text x="0" y="11" fontFamily="Liberation Serif, serif" fontStyle="italic" fontSize="13" fill="#666">fx</text>
          </Svg>
        </FxBox>
        <FBox $grow $ml={4}>
          <span />
          <Svg w={9} h={5} stroke="#555"><path d="M.5.5l4 4 4-4" /></Svg>
        </FBox>
      </FormulaBar>

      <SensBar>
        <Svg w={22} h={22} stroke="none">
          <circle cx="11" cy="11" r="11" fill="#4a7fb8" />
          <path fill="#fff" d="M5 11l6-5.500 6-.5-.5 6-6 6z" /><circle cx="14" cy="8" r="1.300" fill="#4a7fb8" />
        </Svg>
        <SensName $w={65} $ml={9}>Sensitivity:</SensName>
        <SensName $w={163} $b>Not set</SensName>
        <SensBtns>
          <SensBtn>Not classifiable or in...</SensBtn>
          <SensBtn>Public</SensBtn>
          <SensBtn>Open</SensBtn>
          <SensBtn>Confidential</SensBtn>
          <SensBtn>Confidential and Sensitive</SensBtn>
          <SensBtn>Secret</SensBtn>
        </SensBtns>
        <SensClose><Svg w={9} h={9} stroke="#333" strokeWidth="1.400"><path d="M1 1l7 7M8 1L1 8" /></Svg></SensClose>
      </SensBar>

      <SheetArea>
        <GridWrap>
          <Grid>
            <Corner><Triangle /></Corner>
            {cols.map((c) => <ColHead key={c} $sel={c === "E"}>{c}</ColHead>)}
            <ColFill />
            {rows.map((r) => (
              <React.Fragment key={r}>
                <RowHead $sel={r === 5}>{r}</RowHead>
                {cols.map((c) => (
                  <Cell key={c}>
                    {c === "B" && r === 2 && (
                      <>
                        <CellValue>1</CellValue>
                        <Ants width="258" height="81">
                          <rect x="1" y="1" width="256" height="79" fill="none" stroke="#f4f7f5" strokeWidth="2" />
                          <rect x="1" y="1" width="256" height="79" fill="none" stroke={GREEN} strokeWidth="2" strokeDasharray="29 7" strokeDashoffset="29" />
                        </Ants>
                      </>
                    )}
                    {c === "E" && r === 5 && <Selection><Handle /></Selection>}
                  </Cell>
                ))}
                <Cell $end />
              </React.Fragment>
            ))}
          </Grid>
          <Arrow width="60" height="160" viewBox="0 0 60 160" fill="none" stroke="#ed1c24" strokeWidth="3.200" strokeLinecap="round" strokeLinejoin="round">
            <path d="M32 154V136C32 125 28 90 26 76C25 65 26 45 30 23" />
            <path d="M10 25C18 21 25 14 33 7C36 14 43 24 47 32" />
          </Arrow>
        </GridWrap>
        <VScroll>
          <SBtn><Svg w={8} h={4} stroke="none"><path fill="#666" d="M4 0l4 4H0z" /></Svg></SBtn>
          <VTrack>
            <VThumb />
          </VTrack>
          <SBtn><Svg w={8} h={4} stroke="none"><path fill="#666" d="M0 0h8L4 4z" /></Svg></SBtn>
        </VScroll>
      </SheetArea>

      <SheetBar>
        <NavSlot>
          <Svg w={5} h={8} stroke="none"><path fill="#bdbdbd" d="M5 0v8L0 4z" /></Svg>
          <Svg w={5} h={8} stroke="none"><path fill="#bdbdbd" d="M0 0v8l5-4z" /></Svg>
        </NavSlot>
        <SheetTab>Sheet1</SheetTab>
        <SheetTab $on>Sheet2</SheetTab>
        <AddSheet>
          <Svg w={16} h={16} stroke="#666" strokeWidth="1.300"><circle cx="8" cy="8" r="7.200" /><path d="M8 4v8M4 8h8" /></Svg>
        </AddSheet>
        <HGrip><span /><span /><span /></HGrip>
        <HScroll>
          <HBtn><Svg w={4} h={8} stroke="none"><path fill="#666" d="M4 0v8L0 4z" /></Svg></HBtn>
          <HThumb />
          <HFill />
          <HBtn><Svg w={4} h={8} stroke="none"><path fill="#666" d="M0 0v8l4-4z" /></Svg></HBtn>
        </HScroll>
      </SheetBar>

      <Status>
        <StatusText>Select destination and press ENTER or choose Paste</StatusText>
        <ViewBtn $on>
          <Svg w={13} h={13} stroke="#333"><path d="M.5.5h12v12H.5zM.5 4.500h12M.5 8.500h12M4.500.5v12M8.500.5v12" /></Svg>
        </ViewBtn>
        <ViewBtn>
          <Svg w={14} h={13} stroke="#333"><path d="M.5.5h13v12H.5zM3.500 3h7v7.500h-7zM5 5h4M5 7h4M5 9h4" /></Svg>
        </ViewBtn>
        <ViewBtn>
          <Svg w={14} h={13} stroke="#333"><path d="M.5.5h13v12H.5zM.5 8.500h9V.5M5 .5v8" /></Svg>
        </ViewBtn>
        <Zoomer>
          <Svg w={8} h={2} stroke="#444"><path d="M0 1h8" /></Svg>
          <ZoomTrack><ZoomTick /><ZoomThumb /></ZoomTrack>
          <Svg w={9} h={9} stroke="#444"><path d="M0 4.500h9M4.500 0v9" /></Svg>
          <ZoomPct>400%</ZoomPct>
        </Zoomer>
      </Status>
    </Page>
  );
}
